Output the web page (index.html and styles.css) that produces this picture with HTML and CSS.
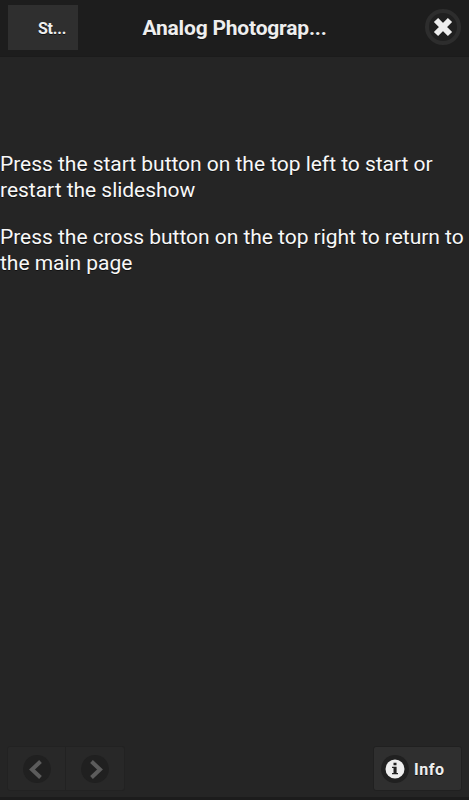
FILE: index.html
```html
<!DOCTYPE html>
<html lang="en">

<head>
  <meta charset="UTF-8" />
  <meta name="viewport" content="width=device-width, initial-scale=1.0" />
  <title>Analog Photography</title>
  <link rel="stylesheet" href="styles.css">
</head>

<body>
  <header class="header">
    <button type="button" class="start">St...</button>
    <h1>Analog Photograp...</h1>
    <button type="button" class="close" aria-label="Close">
      <svg width="20" height="20" viewBox="0 0 20 20">
        <path class="cross" d="M3 3L17 17M17 3L3 17" />
      </svg>
    </button>
  </header>

  <main>
    <p>Press the start button on the top left to start or restart the slideshow</p>
    <p>Press the cross button on the top right to return to the main page</p>
  </main>

  <footer class="footer">
    <div class="controls">
      <button type="button" aria-label="Previous" disabled>
        <span class="disc">
          <svg width="28" height="28" viewBox="0 0 28 28">
            <path class="arrow" d="M17.5 6.5L9 14.5L17.5 22.5" />
          </svg>
        </span>
      </button>
      <button type="button" aria-label="Next" disabled>
        <span class="disc">
          <svg width="28" height="28" viewBox="0 0 28 28">
            <path class="arrow" d="M10.5 6.5L19 14.5L10.5 22.5" />
          </svg>
        </span>
      </button>
    </div>
    <button type="button" class="info">
      <span class="disc">
        <svg width="20" height="20" viewBox="0 0 20 20">
          <circle cx="10" cy="10" r="9.5" fill="#eee" />
          <path fill="#222" d="M8.5 3.7h3v2.6h-3zM7 7.7h4.6v6.2H13v1.3H7v-1.3h1.5V9H7z" />
        </svg>
      </span>
      <span class="label">Info</span>
    </button>
  </footer>
</body>

</html>
```
FILE: styles.css
```css
* {
  box-sizing: border-box;
}

body {
  display: flex;
  flex-direction: column;
  height: 100vh;
  margin: 0;
  background: #252525;
  color: #fff;
  font-family: Roboto, sans-serif;
  text-shadow: 0 1px 0 #111;
}

button {
  padding: 0;
  border: none;
  background: #2f2f2f;
  color: #eee;
  font-family: Roboto, sans-serif;
  font-weight: bold;
  font-size: 16px;
  text-shadow: 0 1px 0 #111;
}

svg {
  display: block;
}

.header {
  display: grid;
  grid-template-columns: 71px 1fr 71px;
  align-items: center;
  height: 57px;
  padding: 0 8px 1px;
  background: #1d1d1d;
  border-bottom: 1px solid #1b1b1b;
}

.start {
  width: 70px;
  height: 45px;
  padding: 1px 0 0 18px;
  letter-spacing: -0.2px;
}

h1 {
  margin: 0;
  padding-top: 1px;
  font-size: 21px;
  line-height: 28px;
  letter-spacing: -0.2px;
  text-align: center;
  color: #eee;
}

.close {
  display: flex;
  align-items: center;
  justify-content: center;
  justify-self: end;
  width: 36px;
  height: 36px;
  margin-top: -2px;
  border: 4px solid #2d2d2d;
  border-radius: 50%;
  background: #202020;
}

.cross {
  fill: none;
  stroke: #eee;
  stroke-width: 6;
  stroke-linecap: butt;
}

main {
  flex: 1;
  padding-top: 94px;
}

main p {
  margin: 0 0 21px;
  font-size: 21px;
  line-height: 26px;
  letter-spacing: -0.03px;
  color: #f8f8f8;
}

.footer {
  display: flex;
  justify-content: space-between;
  align-items: flex-start;
  height: 54px;
  padding: 0 7px;
  border-bottom: 3px solid #1c1c1c;
}

.controls {
  display: flex;
}

.controls button {
  display: flex;
  align-items: center;
  justify-content: center;
  width: 59px;
  height: 45px;
  background: #282828;
  border: 1px solid #222;
  border-radius: 3px 0 0 3px;
}

.controls button + button {
  border-left: none;
  border-radius: 0 3px 3px 0;
}

.disc {
  display: flex;
  align-items: center;
  justify-content: center;
  width: 28px;
  height: 28px;
  border-radius: 50%;
  background: #202020;
}

.arrow {
  fill: none;
  stroke: #5c5c5c;
  stroke-width: 4;
}

.info {
  display: flex;
  align-items: center;
  gap: 5px;
  width: 89px;
  height: 45px;
  padding-left: 7px;
  border: 1px solid #202020;
  border-radius: 3px;
}

.label {
  padding-top: 1px;
  letter-spacing: 0.5px;
}
```
